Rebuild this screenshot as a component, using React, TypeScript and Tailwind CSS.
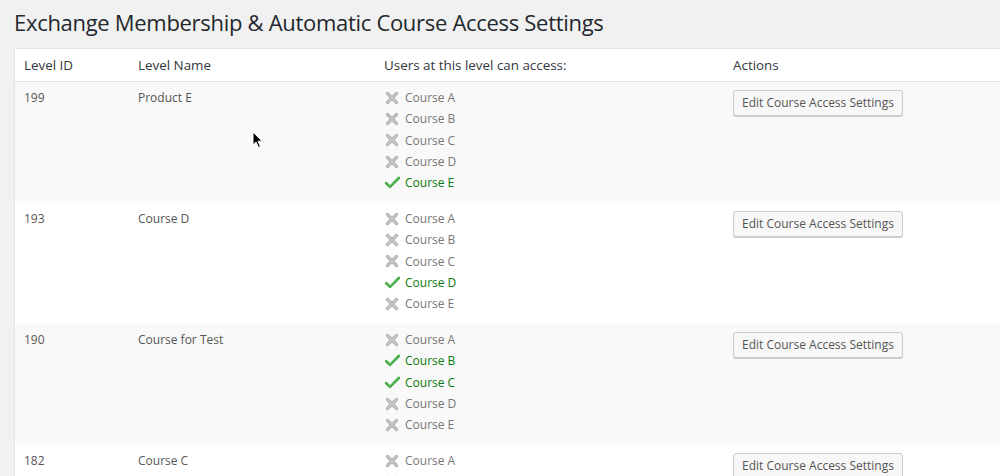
import React from "react";

type Row = { id: string; name: string; access: boolean[] };

const rows: Row[] = [
  { id: "199", name: "Product E", access: [false, false, false, false, true] },
  { id: "193", name: "Course D", access: [false, false, false, true, false] },
  { id: "190", name: "Course for Test", access: [false, true, true, false, false] },
  { id: "182", name: "Course C", access: [false, false, false, false, false] },
];

const courses = ["Course A", "Course B", "Course C", "Course D", "Course E"];

function XIcon() {
  return (
    <svg width="14" height="14" viewBox="0 0 14 14" className="shrink-0">
      <path d="M2.5 2.5 L11.5 11.5 M11.5 2.5 L2.5 11.5" stroke="#b0b0b0" strokeWidth="3.2" strokeLinecap="round" />
      <path d="M2.5 2.5 L11.5 11.5 M11.5 2.5 L2.5 11.5" stroke="#cacaca" strokeWidth="1.2" strokeLinecap="round" />
    </svg>
  );
}

function CheckIcon() {
  return (
    <svg width="15" height="13" viewBox="0 0 15 13" className="shrink-0">
      <path d="M1.2 7.2 L5 10.8 L13.8 2" fill="none" stroke="#3fa83f" strokeWidth="2.6" strokeLinecap="round" strokeLinejoin="round" />
      <path d="M1.8 7.2 L5 10.2 L13.2 2.4" fill="none" stroke="#6cc46c" strokeWidth="0.9" strokeLinecap="round" strokeLinejoin="round" />
    </svg>
  );
}

function Cursor() {
  return (
    <svg width="12" height="18" viewBox="0 0 12 18" className="absolute left-[252px] top-[131px]">
      <path d="M1 1 L1 14 L4 11 L6.5 16.5 L8.5 15.5 L6 10.2 L10 10.2 Z" fill="#000" stroke="#fff" strokeWidth="1" strokeLinejoin="round" />
    </svg>
  );
}

export default function App() {
  return (
    <div
      className="relative w-[1000px] h-[476px] overflow-hidden bg-[#f1f1f1]"
      style={{ fontFamily: '"Open Sans", "Noto Sans", sans-serif' }}
    >
      <h1 className="pl-[14px] pt-[6px] h-[48px] text-[22px] tracking-[-0.3px] leading-[32px] text-[#23282d] font-normal">
        Exchange Membership &amp; Automatic Course Access Settings
      </h1>
      <div className="ml-[14px] w-[1000px] border-l border-t border-[#e5e5e5] bg-white shadow-[0_1px_1px_rgba(0,0,0,0.04)]">
        <div className="flex h-[33px] items-center border-b border-[#e1e1e1] text-[13.4px] text-[#32373c]">
          <div className="w-[123px] pl-[9px]">Level ID</div>
          <div className="w-[246px]">Level Name</div>
          <div className="w-[349px]">Users at this level can access:</div>
          <div>Actions</div>
        </div>
        {rows.map((r, i) => (
          <div
            key={r.id}
            className={`flex h-[121px] text-[12px] text-[#555] ${i % 2 === 0 ? "bg-[#f9f9f9]" : "bg-white"}`}
          >
            <div className="w-[123px] pl-[9px] pt-[5px] leading-[21px]">{r.id}</div>
            <div className="w-[246px] pt-[5px] leading-[21px]">{r.name}</div>
            <div className="w-[349px] pt-[5px]">
              {courses.map((c, j) => (
                <div key={c} className="flex h-[21.3px] items-center">
                  <div className="flex w-[21px] pl-[1px]">
                    {r.access[j] ? <CheckIcon /> : <XIcon />}
                  </div>
                  <span className={`leading-[21px] ${r.access[j] ? "text-[#0a7a0a]" : "text-[#777]"}`}>{c}</span>
                </div>
              ))}
            </div>
            <div className="pt-[8px]">
              <button className="h-[26px] rounded-[3px] border border-[#cccccc] bg-[#f7f7f7] px-[8px] text-[12px] leading-[24px] text-[#555] shadow-[0_1px_0_#cccccc]">
                Edit Course Access Settings
              </button>
            </div>
          </div>
        ))}
      </div>
      <Cursor />
    </div>
  );
}
